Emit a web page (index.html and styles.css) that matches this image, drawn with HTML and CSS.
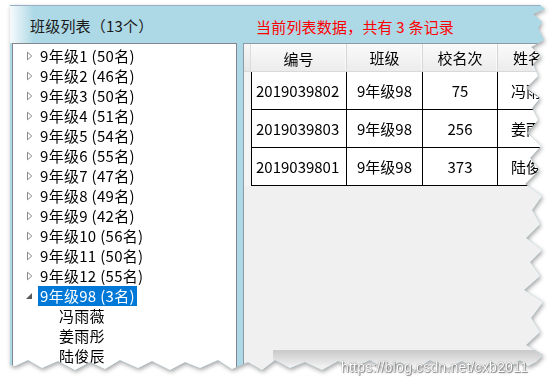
FILE: index.html
```html
<!DOCTYPE html>
<html lang="zh-CN">
<head>
<meta charset="utf-8">
<title>班级列表</title>
<link rel="stylesheet" href="styles.css">
</head>
<body>
<div class="sheet">
  <div class="paper">
    <div class="window">
      <div class="header">
        <span class="title">班级列表（13个）</span>
        <span class="summary">当前列表数据，共有 3 条记录</span>
      </div>
      <div class="body">
        <div class="tree">
          <div class="node"><span class="exp"><svg width="7" height="10" viewBox="0 0 7 10"><path d="M1.5 1.2 L5.8 5 L1.5 8.8 Z" fill="#fff" stroke="#8a8a8a" stroke-width="1"/></svg></span><span class="label">9年级1 (50名)</span></div>
          <div class="node"><span class="exp"><svg width="7" height="10" viewBox="0 0 7 10"><path d="M1.5 1.2 L5.8 5 L1.5 8.8 Z" fill="#fff" stroke="#8a8a8a" stroke-width="1"/></svg></span><span class="label">9年级2 (46名)</span></div>
          <div class="node"><span class="exp"><svg width="7" height="10" viewBox="0 0 7 10"><path d="M1.5 1.2 L5.8 5 L1.5 8.8 Z" fill="#fff" stroke="#8a8a8a" stroke-width="1"/></svg></span><span class="label">9年级3 (50名)</span></div>
          <div class="node"><span class="exp"><svg width="7" height="10" viewBox="0 0 7 10"><path d="M1.5 1.2 L5.8 5 L1.5 8.8 Z" fill="#fff" stroke="#8a8a8a" stroke-width="1"/></svg></span><span class="label">9年级4 (51名)</span></div>
          <div class="node"><span class="exp"><svg width="7" height="10" viewBox="0 0 7 10"><path d="M1.5 1.2 L5.8 5 L1.5 8.8 Z" fill="#fff" stroke="#8a8a8a" stroke-width="1"/></svg></span><span class="label">9年级5 (54名)</span></div>
          <div class="node"><span class="exp"><svg width="7" height="10" viewBox="0 0 7 10"><path d="M1.5 1.2 L5.8 5 L1.5 8.8 Z" fill="#fff" stroke="#8a8a8a" stroke-width="1"/></svg></span><span class="label">9年级6 (55名)</span></div>
          <div class="node"><span class="exp"><svg width="7" height="10" viewBox="0 0 7 10"><path d="M1.5 1.2 L5.8 5 L1.5 8.8 Z" fill="#fff" stroke="#8a8a8a" stroke-width="1"/></svg></span><span class="label">9年级7 (47名)</span></div>
          <div class="node"><span class="exp"><svg width="7" height="10" viewBox="0 0 7 10"><path d="M1.5 1.2 L5.8 5 L1.5 8.8 Z" fill="#fff" stroke="#8a8a8a" stroke-width="1"/></svg></span><span class="label">9年级8 (49名)</span></div>
          <div class="node"><span class="exp"><svg width="7" height="10" viewBox="0 0 7 10"><path d="M1.5 1.2 L5.8 5 L1.5 8.8 Z" fill="#fff" stroke="#8a8a8a" stroke-width="1"/></svg></span><span class="label">9年级9 (42名)</span></div>
          <div class="node"><span class="exp"><svg width="7" height="10" viewBox="0 0 7 10"><path d="M1.5 1.2 L5.8 5 L1.5 8.8 Z" fill="#fff" stroke="#8a8a8a" stroke-width="1"/></svg></span><span class="label">9年级10 (56名)</span></div>
          <div class="node"><span class="exp"><svg width="7" height="10" viewBox="0 0 7 10"><path d="M1.5 1.2 L5.8 5 L1.5 8.8 Z" fill="#fff" stroke="#8a8a8a" stroke-width="1"/></svg></span><span class="label">9年级11 (50名)</span></div>
          <div class="node"><span class="exp"><svg width="7" height="10" viewBox="0 0 7 10"><path d="M1.5 1.2 L5.8 5 L1.5 8.8 Z" fill="#fff" stroke="#8a8a8a" stroke-width="1"/></svg></span><span class="label">9年级12 (55名)</span></div>
          <div class="node"><span class="exp"><svg width="7" height="10" viewBox="0 0 7 10"><path d="M6 2 L6 8 L0 8 Z" fill="#595959"/></svg></span><span class="label selected">9年级98 (3名)</span></div>
          <div class="node child"><span class="exp"></span><span class="label">冯雨薇</span></div>
          <div class="node child"><span class="exp"></span><span class="label">姜雨彤</span></div>
          <div class="node child"><span class="exp"></span><span class="label">陆俊辰</span></div>
        </div>
        <div class="splitter"></div>
        <div class="panel">
          <div class="grid">
            <div class="row head">
              <div class="rh"></div>
              <div class="cell c1">编号</div>
              <div class="cell c2">班级</div>
              <div class="cell c3">校名次</div>
              <div class="cell c4">姓名</div>
            </div>
            <div class="row data">
              <div class="rh"></div>
              <div class="cell c1">2019039802</div>
              <div class="cell c2">9年级98</div>
              <div class="cell c3">75</div>
              <div class="cell c4">冯雨薇</div>
            </div>
            <div class="row data">
              <div class="rh"></div>
              <div class="cell c1">2019039803</div>
              <div class="cell c2">9年级98</div>
              <div class="cell c3">256</div>
              <div class="cell c4">姜雨彤</div>
            </div>
            <div class="row data">
              <div class="rh"></div>
              <div class="cell c1">2019039801</div>
              <div class="cell c2">9年级98</div>
              <div class="cell c3">373</div>
              <div class="cell c4">陆俊辰</div>
            </div>
          </div>
          <div class="hbar"></div>
        </div>
      </div>
    </div>
  </div>
</div>
<div class="watermark">https://blog.csdn.net/cxb2011</div>
</body>
</html>
```
FILE: styles.css
```css
* { box-sizing: border-box; }
html, body { margin: 0; padding: 0; background: #fff; }
body {
  width: 555px;
  height: 387px;
  overflow: hidden;
  position: relative;
  font-family: "Noto Sans CJK SC", "Noto Sans", sans-serif;
  font-size: 15px;
  color: #000;
}
.sheet {
  width: 555px;
  height: 387px;
  filter: drop-shadow(1px 2px 2px rgba(0,0,0,0.35));
}
.paper {
  width: 555px;
  height: 387px;
  padding: 5px 0 0 10px;
  clip-path: polygon(0 0, 540px 5px, 545px 9px, 533px 14px, 542px 22px, 538px 28px, 544px 40px, 531px 47px, 541px 56px, 533px 64px, 538px 76px, 526px 88px, 540px 98px, 532px 108px, 538px 120px, 527px 133px, 541px 146px, 530px 158px, 539px 170px, 525px 184px, 542px 196px, 532px 210px, 540px 224px, 526px 238px, 542px 250px, 530px 262px, 540px 276px, 524px 290px, 543px 302px, 531px 318px, 540px 332px, 526px 345px, 543px 355px, 536px 362px, 528px 366px, 520px 360px, 505px 370px, 492px 362px, 478px 369px, 462px 361px, 448px 368px, 430px 360px, 415px 370px, 400px 362px, 385px 369px, 370px 360px, 352px 368px, 338px 361px, 322px 370px, 305px 362px, 290px 368px, 275px 360px, 262px 370px, 248px 362px, 232px 369px, 218px 360px, 200px 368px, 185px 362px, 170px 370px, 152px 361px, 138px 368px, 120px 360px, 105px 369px, 90px 362px, 75px 370px, 58px 361px, 42px 368px, 28px 360px, 15px 366px, 0 362px);
}
.window {
  width: 545px;
  height: 370px;
  background: #add8e6;
  border-top: 1px solid #97aec4;
  display: flex;
  flex-direction: column;
  overflow: hidden;
}
.header {
  height: 37px;
  flex: none;
  display: grid;
  grid-template-columns: 226px auto;
  align-items: center;
  padding-left: 20px;
  padding-top: 1px;
  background: linear-gradient(to right, #f6fbfc 0, #add8e6 24px);
}
.title { color: #1a1a1a; white-space: nowrap; letter-spacing: 0.2px; }
.summary { color: #ff0000; white-space: nowrap; padding-top: 2px; letter-spacing: 0.2px; }
.body {
  flex: 1;
  display: flex;
  padding-left: 2px;
  background: #add8e6;
}
.tree {
  width: 225px;
  flex: none;
  background: #fff;
  border: 1px solid #828790;
  padding-top: 2px;
}
.node {
  height: 20px;
  display: flex;
  align-items: center;
  padding-left: 7px;
  white-space: nowrap;
}
.node.child { padding-left: 26px; }
.exp {
  width: 18px;
  height: 20px;
  flex: none;
  display: flex;
  align-items: center;
  justify-content: center;
}
.label {
  height: 20px;
  line-height: 20px;
  padding: 0 2px;
  letter-spacing: 0.3px;
}
.label.selected {
  background: #0078d7;
  color: #fff;
}
.splitter {
  width: 6px;
  flex: none;
}
.panel {
  flex: 1;
  display: flex;
  flex-direction: column;
  background: #f0f0f0;
  border-left: 1px solid #8a9aa8;
  border-top: 1px solid #8a9aa8;
}
.grid { display: flex; flex-direction: column; }
.row { display: flex; white-space: nowrap; }
.rh { width: 7px; flex: none; }
.cell {
  flex: none;
  display: flex;
  align-items: center;
  justify-content: center;
}
.c1 { width: 96px; }
.c2 { width: 76px; }
.c3 { width: 75px; }
.c4 { width: 80px; justify-content: flex-start; padding-left: 15px; }
.row.head {
  height: 28px;
  background: linear-gradient(#fafafa, #ececec);
  border-bottom: 1px solid #d9d9d9;
}
.row.head .rh { background: linear-gradient(#f7f7f7, #e6e6e6); border-right: 1px solid #dcdcdc; }
.row.head .cell { border-right: 1px solid #d6d6d6; box-shadow: inset -1px 0 0 #fbfbfb; }
.row.head .c1 { padding-top: 1px; }
.row.data { height: 38px; }
.row.data .rh { background: #f4f4f4; }
.row.data .cell {
  background: #fff;
  border-right: 1px solid #000;
  border-bottom: 1px solid #000;
}
.row.data .c1 {
  border-left: 1px solid #000;
  justify-content: flex-start;
  padding-left: 4px;
}
.row.data .c4 { padding-left: 13px; }
.hbar {
  margin-top: auto;
  margin-left: 29px;
  margin-bottom: 10px;
  height: 15px;
  background: linear-gradient(#c9c9c9, #ececec);
}
.watermark {
  position: absolute;
  left: 341px;
  top: 359px;
  font-family: "Liberation Sans", Arial, sans-serif;
  font-size: 14px;
  color: #fff;
  text-shadow: 0 0 1px #555, 1px 1px 1px #888;
  letter-spacing: 0.2px;
  white-space: nowrap;
}
```
